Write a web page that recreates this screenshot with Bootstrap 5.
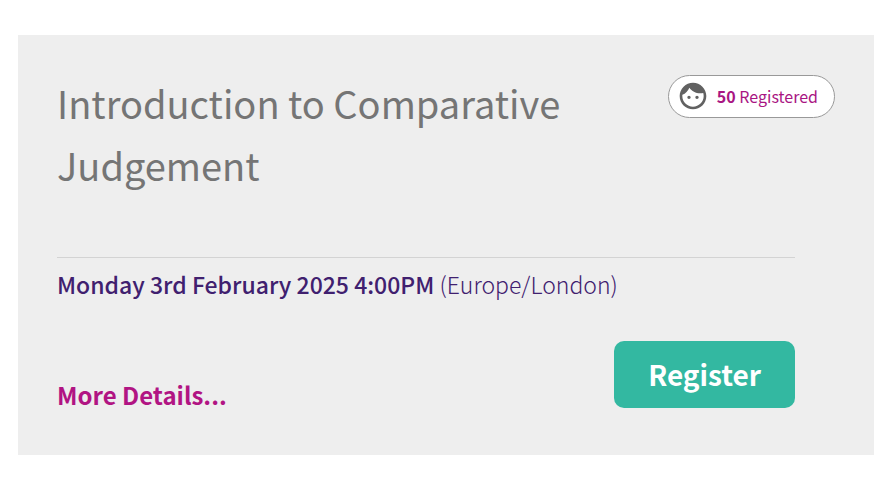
<!DOCTYPE html>
<html lang="en">
<head>
<meta charset="utf-8">
<meta name="viewport" content="width=device-width, initial-scale=1">
<title>Introduction to Comparative Judgement</title>
<link href="https://cdn.jsdelivr.net/npm/bootstrap@5.3.0/dist/css/bootstrap.min.css" rel="stylesheet">
<style>
  body { font-family: "Source Sans Pro", "Noto Sans CJK SC", sans-serif; background: #fff; }
  .event-page { padding: 35px 18px 27px; }
  .event-panel { background: #eee; padding: 37px 39px 47px; }
  .event-title { font-size: 38px; line-height: 62px; font-weight: 400; color: #757575; max-width: 540px; }
  .registered-pill { background: #fff; border: 1px solid #999; color: #a91583; font-size: 16px; line-height: 24px; padding: 4px 16px 5px 8px; margin-top: 3px; }
  .registered-pill strong { font-weight: 700; }
  .registered-pill svg { fill: #616161; }
  .event-body { margin-right: 40px; margin-top: 61px; border-top: 1px solid #d3d3d3; }
  .event-time { color: #40206f; font-size: 23px; line-height: 34px; font-weight: 300; padding-top: 9px; margin-bottom: 40px; }
  .event-time strong { font-weight: 500; }
  .more-link { color: #b11483; font-size: 24px; line-height: 26px; font-weight: 700; }
  .register-btn, .register-btn:hover { background: #33b8a1; color: #fff; font-size: 28px; line-height: 35px; font-weight: 700; border: 0; border-radius: 10px; padding: 16px 34px; }
</style>
</head>
<body>
<main class="event-page">
  <article class="event-panel">
    <header class="d-flex justify-content-between align-items-start">
      <h1 class="event-title mb-0">Introduction to Comparative Judgement</h1>
      <div class="registered-pill rounded-pill d-flex align-items-center flex-shrink-0 gap-2">
        <svg width="32" height="32" viewBox="0 0 24 24" aria-hidden="true"><path d="M9 11.75c-.69 0-1.25.56-1.25 1.25s.56 1.25 1.25 1.25 1.25-.56 1.25-1.25-.56-1.25-1.25-1.25zm6 0c-.69 0-1.25.56-1.25 1.25s.56 1.25 1.25 1.25 1.25-.56 1.25-1.25-.56-1.25-1.25-1.25zM12 2C6.48 2 2 6.48 2 12s4.48 10 10 10 10-4.48 10-10S17.52 2 12 2zm0 18c-4.41 0-8-3.59-8-8 0-.29.02-.58.05-.86 2.36-1.05 4.23-2.98 5.21-5.37C11.07 8.33 14.05 10 17.42 10c.78 0 1.53-.09 2.25-.26.21.71.33 1.47.33 2.26 0 4.41-3.59 8-8 8z"/></svg>
        <span><strong>50</strong> Registered</span>
      </div>
    </header>
    <div class="event-body">
      <p class="event-time"><strong>Monday 3rd February 2025 4:00PM</strong> (Europe/London)</p>
      <div class="d-flex justify-content-between align-items-end">
        <a class="more-link text-decoration-none" href="#details">More Details...</a>
        <button type="button" class="btn register-btn">Register</button>
      </div>
    </div>
  </article>
</main>
<script src="https://cdn.jsdelivr.net/npm/bootstrap@5.3.0/dist/js/bootstrap.bundle.min.js"></script>
</body>
</html>
